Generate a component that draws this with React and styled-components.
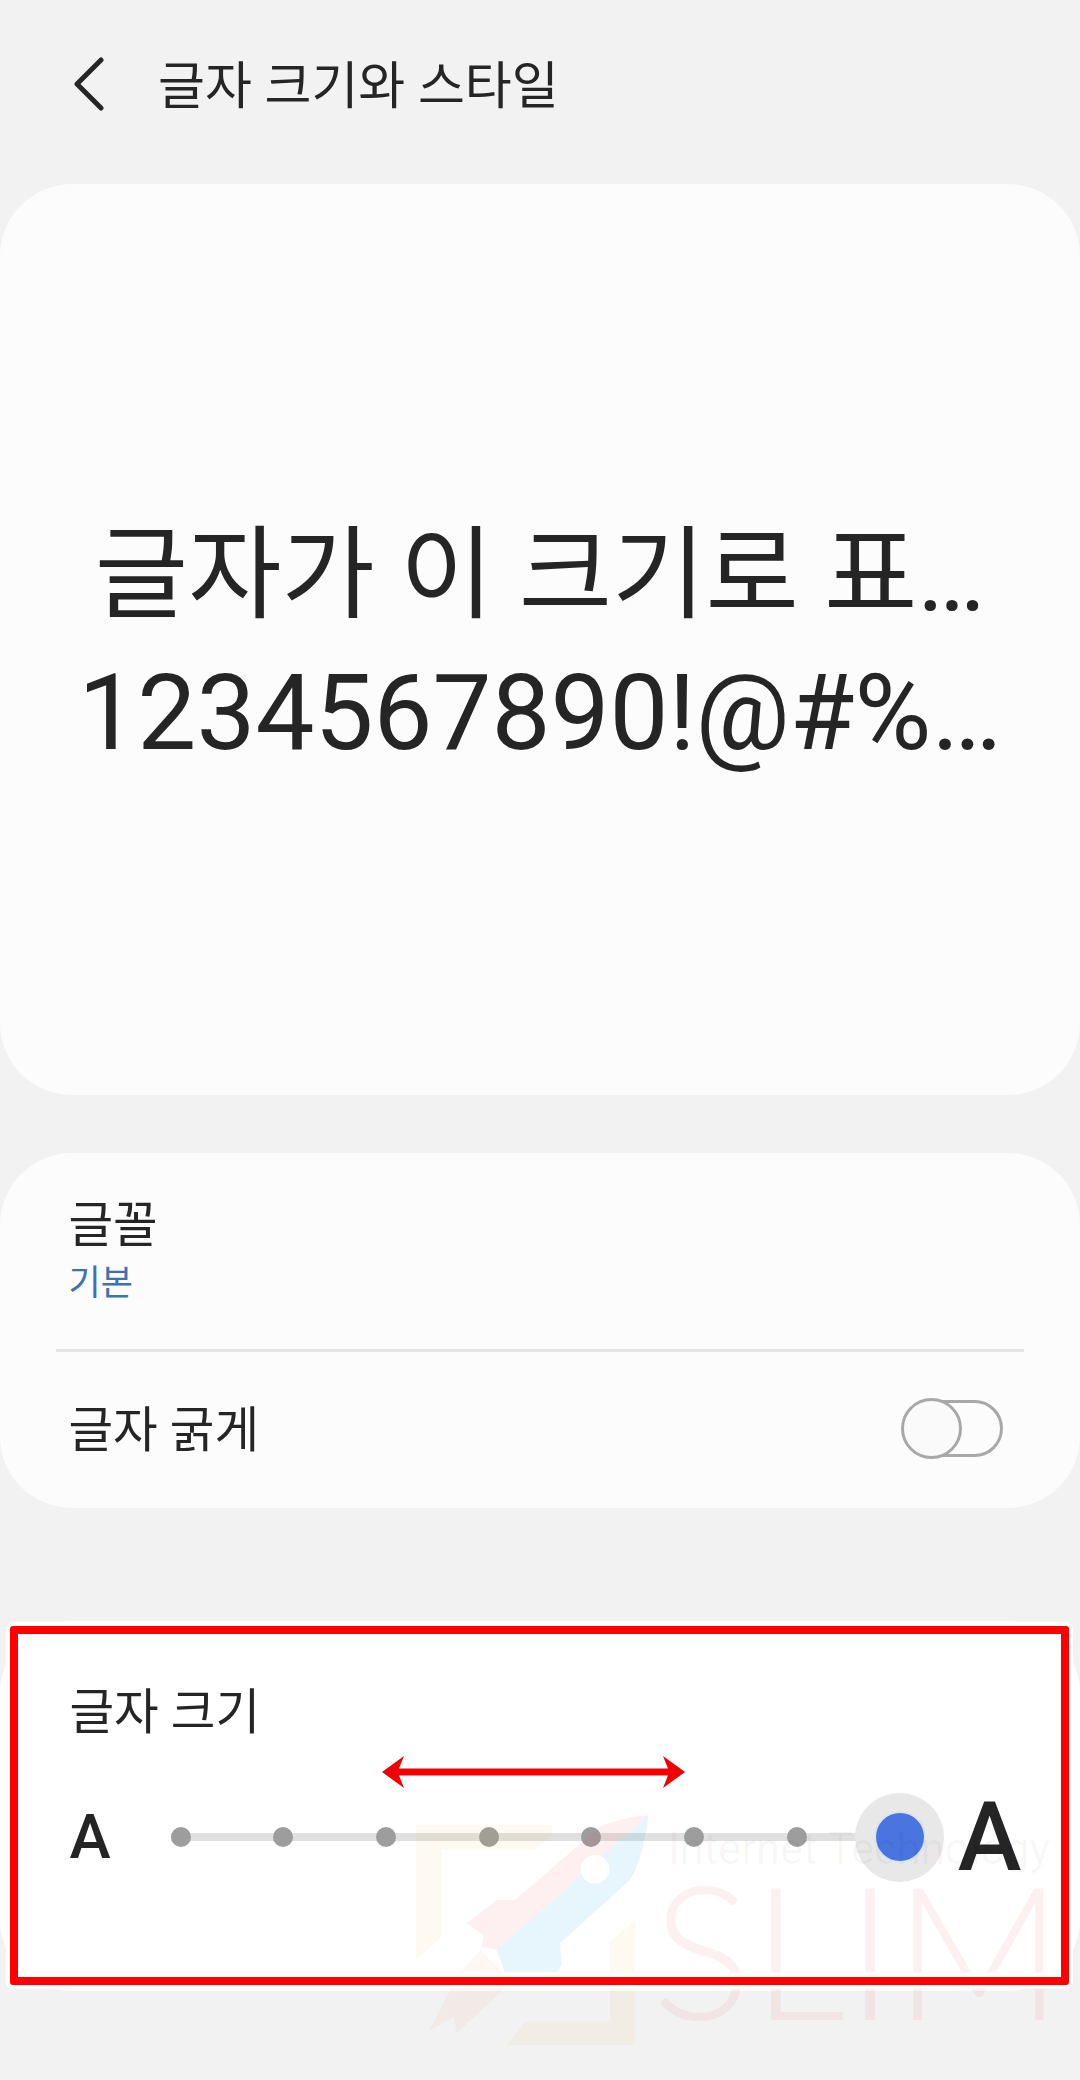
import { createGlobalStyle, styled } from "styled-components";

const GlobalStyle = createGlobalStyle`
  html, body {
    margin: 0;
    padding: 0;
    background: #f2f2f2;
  }
  body {
    font-family: Roboto, "Noto Sans CJK KR", sans-serif;
    color: #252525;
  }
`;

const Page = styled.div`
  position: relative;
  width: 1080px;
  height: 2080px;
  overflow: hidden;
  background: #f2f2f2;
`;

const Header = styled.header`
  display: flex;
  align-items: center;
  gap: 54px;
  height: 168px;
  padding: 0 0 16px 74px;
`;

const BackIcon = styled.svg`
  display: block;
  width: 30px;
  height: 54px;
  fill: none;
  stroke: #252525;
  stroke-width: 5;
  stroke-linecap: round;
  stroke-linejoin: round;
`;

const Title = styled.h1`
  margin: 5px 0 0;
  font-size: 51px;
  font-weight: 400;
  line-height: 1;
`;

const Card = styled.section`
  background: #fcfcfc;
  border-radius: 72px;
`;

const PreviewCard = styled(Card)`
  display: flex;
  flex-direction: column;
  align-items: center;
  justify-content: center;
  gap: 2px;
  height: 911px;
  padding-top: 11px;
  box-sizing: border-box;
  margin-bottom: 58px;
`;

const PreviewLine = styled.p`
  margin: 0;
  font-size: ${(p) => p.$size}px;
  line-height: 136px;
  white-space: nowrap;
`;

const SettingsCard = styled(Card)`
  height: 355px;
  padding: 0 56px;
`;

const FontRow = styled.div`
  display: flex;
  flex-direction: column;
  justify-content: center;
  gap: 10px;
  height: 199px;
  padding: 0 12.5px;
  box-sizing: border-box;
  border-bottom: 3px solid #e4e4e4;
`;

const RowLabel = styled.div`
  font-size: 48.5px;
  line-height: 56px;
`;

const BoldLabel = styled(RowLabel)`
  margin-top: 5px;
`;

const RowValue = styled.div`
  font-size: 35px;
  line-height: 40px;
  color: #3f70b2;
`;

const BoldRow = styled.div`
  display: flex;
  align-items: center;
  justify-content: space-between;
  height: 153px;
  padding: 0 21px 0 12.5px;
`;

const Toggle = styled.div`
  position: relative;
  width: 100px;
  height: 57px;
  box-sizing: border-box;
  border: 3px solid #a8a8a8;
  border-radius: 29px;
`;

const ToggleThumb = styled.div`
  position: absolute;
  top: -5px;
  left: -5px;
  width: 61px;
  height: 61px;
  box-sizing: border-box;
  border: 3px solid #a8a8a8;
  border-radius: 50%;
  background: #fafafa;
`;

const SizeCard = styled(Card)`
  height: 370px;
  margin-top: 113px;
  padding: 64px 0 0 69.5px;
  box-sizing: border-box;
  background: #fff;
`;

const SliderRow = styled.div`
  display: flex;
  align-items: center;
  height: 90px;
  margin-top: 51px;
`;

const SizeLetter = styled.span`
  font-weight: 500;
  font-size: ${(p) => p.$size}px;
  line-height: 90px;
  flex: none;
`;

const Track = styled.div`
  display: flex;
  align-items: center;
  justify-content: space-between;
  width: 739px;
  height: 8px;
  margin: 0 48px 0 60px;
  background: #e0e0e0;
  flex: none;
`;

const Tick = styled.span`
  width: 20px;
  height: 20px;
  border-radius: 50%;
  background: #9d9d9d;
  flex: none;
`;

const Thumb = styled.span`
  position: relative;
  width: 20px;
  height: 20px;
  flex: none;

  &::before {
    content: "";
    position: absolute;
    inset: -34.5px;
    border-radius: 50%;
    background: #e8e8e8;
  }

  &::after {
    content: "";
    position: absolute;
    inset: -14px;
    border-radius: 50%;
    background: #4a75e0;
    box-shadow: 0 0 0 2px #d8e4fa;
  }
`;

const Watermark = styled.div`
  position: absolute;
  left: 0;
  top: 0;
  width: 1080px;
  height: 2080px;
  pointer-events: none;
`;

const LogoMark = styled.svg`
  position: absolute;
  left: 400px;
  top: 1800px;
  width: 270px;
  height: 270px;
`;

const WatermarkTitle = styled.span`
  position: absolute;
  left: 668px;
  top: 1826px;
  font-size: 43.5px;
  line-height: 48px;
  color: rgba(0, 0, 0, 0.035);
  white-space: nowrap;
`;

const WatermarkName = styled.span`
  position: absolute;
  left: 652px;
  top: 1838px;
  font-family: Lato, Roboto, sans-serif;
  font-weight: 300;
  font-size: 186px;
  line-height: 220px;
  color: rgba(232, 70, 70, 0.08);
  white-space: nowrap;
`;

const RedFrame = styled.div`
  position: absolute;
  left: 10px;
  top: 1626px;
  width: 1059px;
  height: 359px;
  box-sizing: border-box;
  border: 8px solid #fe0000;
  border-radius: 3px;
  box-shadow: 0 0 0 4px #fff, inset 0 0 0 5px #fff;
  pointer-events: none;
`;

const ArrowMark = styled.svg`
  position: absolute;
  left: 380px;
  top: 1755px;
  width: 307px;
  height: 34px;
  fill: #f00000;
`;

const ticks = [1, 2, 3, 4, 5, 6, 7];

export default function App() {
  return (
    <Page>
      <GlobalStyle />
      <Header>
        <BackIcon viewBox="0 0 30 54">
          <path d="M27 3 L3 27 L27 51" />
        </BackIcon>
        <Title>글자 크기와 스타일</Title>
      </Header>
      <PreviewCard>
        <PreviewLine $size={101.5}>글자가 이 크기로 표…</PreviewLine>
        <PreviewLine $size={105}>1234567890!@#%…</PreviewLine>
      </PreviewCard>
      <SettingsCard>
        <FontRow>
          <RowLabel>글꼴</RowLabel>
          <RowValue>기본</RowValue>
        </FontRow>
        <BoldRow>
          <BoldLabel>글자 굵게</BoldLabel>
          <Toggle>
            <ToggleThumb />
          </Toggle>
        </BoldRow>
      </SettingsCard>
      <SizeCard>
        <RowLabel>글자 크기</RowLabel>
        <SliderRow>
          <SizeLetter $size={62}>A</SizeLetter>
          <Track>
            {ticks.map((t) => (
              <Tick key={t} />
            ))}
            <Thumb />
          </Track>
          <SizeLetter $size={96}>A</SizeLetter>
        </SliderRow>
      </SizeCard>
      <Watermark>
        <LogoMark viewBox="0 0 810 810">
          <g fill="rgb(245, 190, 60)" fillOpacity="0.07">
            <path d="M48 75 H455 V110 L400 150 H125 V410 L48 480 Z" />
            <path d="M705 360 V735 H320 L375 665 H630 V425 Z" />
          </g>
          <path
            d="M745 45 C735 130 715 205 690 240 L480 430 L485 490 L470 530 L320 530 L290 450 Z"
            fill="rgb(60, 180, 240)"
            fillOpacity="0.12"
          />
          <path
            d="M745 45 C690 50 630 65 600 80 L345 300 L290 300 L200 370 L250 405 L245 440 L290 450 Z"
            fill="rgb(240, 90, 90)"
            fillOpacity="0.09"
          />
          <path
            d="M240 450 L320 530 L310 570 L170 700 L160 650 L85 695 L130 610 L170 530 Z"
            fill="rgb(240, 140, 80)"
            fillOpacity="0.07"
          />
          <circle cx="585" cy="208" r="43" fill="#fff" />
        </LogoMark>
        <WatermarkTitle>Internet Technology</WatermarkTitle>
        <WatermarkName>SLIM</WatermarkName>
      </Watermark>
      <RedFrame />
      <ArrowMark viewBox="0 0 307 34">
        <path d="M2 17 L24 1 L19 13.5 H288 L283 1 L305 17 L283 33 L288 20.5 H19 L24 33 Z" />
      </ArrowMark>
    </Page>
  );
}
